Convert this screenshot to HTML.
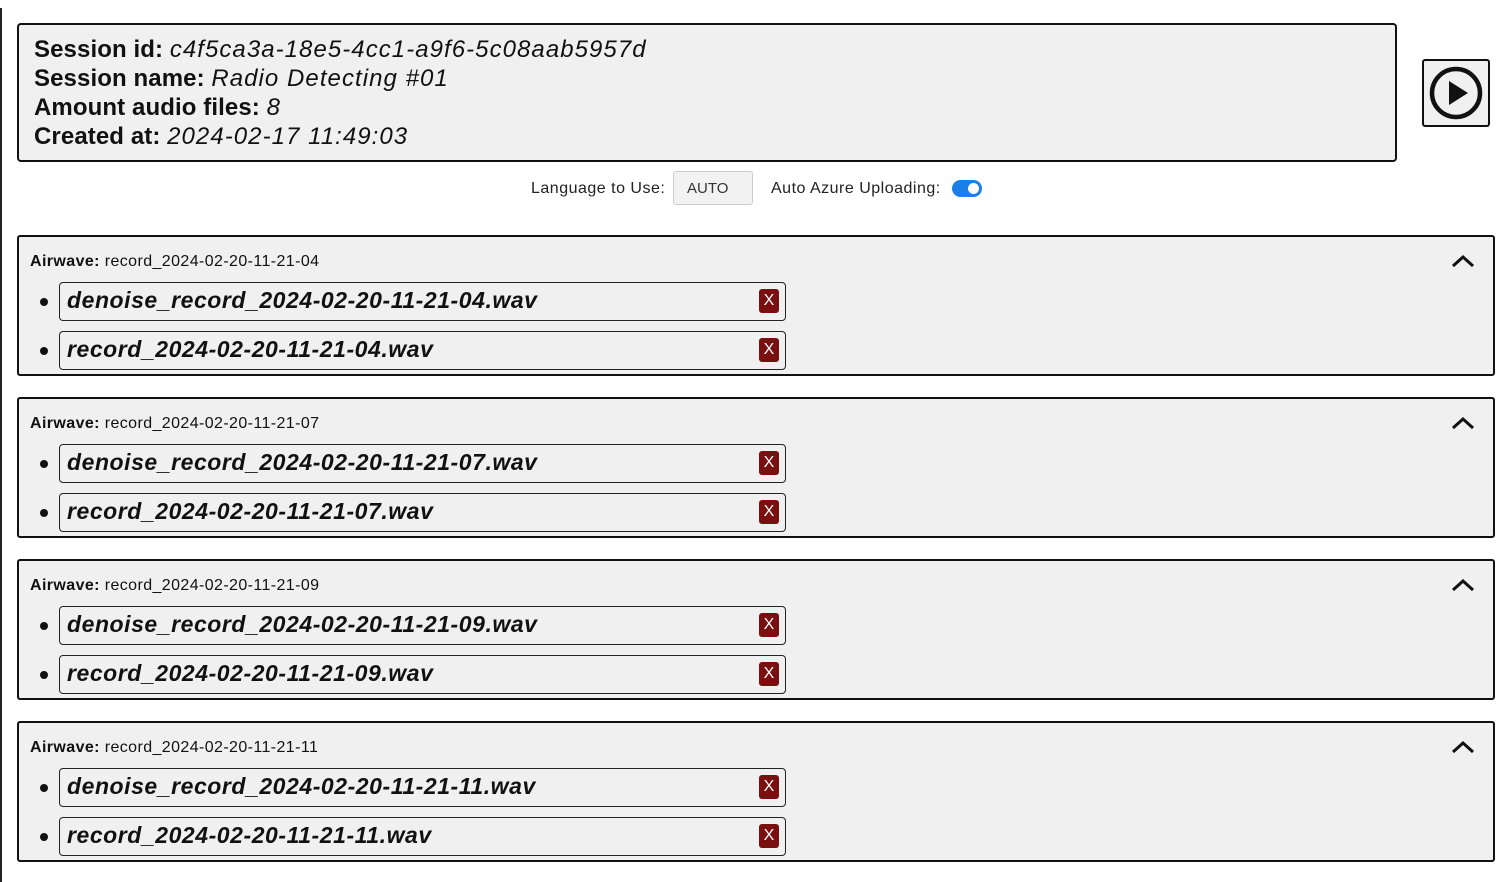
<!DOCTYPE html>
<html><head><style>
body{margin:0;width:1508px;height:882px;background:#fff;font-family:"Liberation Sans",sans-serif;position:relative;overflow:hidden;color:#111}
.vl{position:absolute;left:0;top:8px;width:2px;height:874px;background:#222}
.hdr{position:absolute;left:17px;top:23px;width:1376px;height:135px;border:2px solid #111;border-radius:4px;background:#f0f0f0}
.hdr div{position:absolute;left:15px;font-size:24px;white-space:nowrap;line-height:29px}
.hdr b{font-weight:bold;letter-spacing:0.1px}.hdr i{font-style:italic;font-weight:normal;letter-spacing:1.05px}
.play{position:absolute;left:1422px;top:59px;width:64px;height:64px;border:2px solid #111;border-radius:3px;background:#f0f0f0}
.ctl{position:absolute;top:180px;font-size:16px;letter-spacing:0.5px;color:#222}
.auto{position:absolute;left:673px;top:171px;border:1px solid #ccc;border-radius:3px;background:#f2f2f2;font-size:15px;color:#333;line-height:34px;box-sizing:border-box;padding-left:13px;width:80px;height:34px}
.tg{position:absolute;left:952px;top:180px;width:30px;height:17px;border-radius:9px;background:#1a7fe8}
.tg:after{content:"";position:absolute;right:3px;top:3px;width:11px;height:11px;border-radius:50%;background:#fff}
.sec{position:absolute;left:17px;width:1474px;height:137px;border:2px solid #111;border-radius:3px;background:#f0f0f0}
.sec .t{position:absolute;left:11px;top:16px;font-size:16px;letter-spacing:0.4px}
.sec .ch{position:absolute;left:1432px;top:16px}
.it{position:absolute;left:40px;width:725px;height:37px;border:1px solid #222;border-radius:4px;background:#f0f0f0}
.it span{position:absolute;left:7px;top:4px;font-size:23px;font-weight:bold;font-style:italic;white-space:nowrap;letter-spacing:0.55px}
.it .x{position:absolute;left:699px;top:6px;width:20px;height:24px;background:#7a0f0f;border-radius:3px;color:#fff;font-size:16px;text-align:center;line-height:24px}
.dot{position:absolute;left:21px;width:8px;height:8px;border-radius:50%;background:#111}
</style></head><body>
<div class="vl"></div>
<div class="hdr">
<div style="top:10px"><b>Session id:</b> <i>c4f5ca3a-18e5-4cc1-a9f6-5c08aab5957d</i></div>
<div style="top:39px"><b>Session name:</b> <i>Radio Detecting #01</i></div>
<div style="top:68px"><b>Amount audio files:</b> <i>8</i></div>
<div style="top:97px"><b>Created at:</b> <i>2024-02-17 11:49:03</i></div>
</div>
<div class="play"><svg width="64" height="64" viewBox="0 0 64 64"><circle cx="32" cy="32" r="24" fill="none" stroke="#111" stroke-width="4.5"/><path d="M25 20 L44 32 L25 44 Z" fill="#111"/></svg></div>
<div class="ctl" style="left:531px">Language to Use:</div>
<div class="auto">AUTO</div>
<div class="ctl" style="left:771px">Auto Azure Uploading:</div>
<div class="tg"></div>

<div class="sec" style="top:235px"><div class="t"><b>Airwave:</b> record_2024-02-20-11-21-04</div>
<svg class="ch" width="24" height="16"><path d="M2 13 L12 4 L22 13" fill="none" stroke="#111" stroke-width="3"/></svg>
<div class="dot" style="top:61px"></div><div class="it" style="top:45px"><span>denoise_record_2024-02-20-11-21-04.wav</span><div class="x">X</div></div>
<div class="dot" style="top:110px"></div><div class="it" style="top:94px"><span>record_2024-02-20-11-21-04.wav</span><div class="x">X</div></div></div>

<div class="sec" style="top:397px"><div class="t"><b>Airwave:</b> record_2024-02-20-11-21-07</div>
<svg class="ch" width="24" height="16"><path d="M2 13 L12 4 L22 13" fill="none" stroke="#111" stroke-width="3"/></svg>
<div class="dot" style="top:61px"></div><div class="it" style="top:45px"><span>denoise_record_2024-02-20-11-21-07.wav</span><div class="x">X</div></div>
<div class="dot" style="top:110px"></div><div class="it" style="top:94px"><span>record_2024-02-20-11-21-07.wav</span><div class="x">X</div></div></div>

<div class="sec" style="top:559px"><div class="t"><b>Airwave:</b> record_2024-02-20-11-21-09</div>
<svg class="ch" width="24" height="16"><path d="M2 13 L12 4 L22 13" fill="none" stroke="#111" stroke-width="3"/></svg>
<div class="dot" style="top:61px"></div><div class="it" style="top:45px"><span>denoise_record_2024-02-20-11-21-09.wav</span><div class="x">X</div></div>
<div class="dot" style="top:110px"></div><div class="it" style="top:94px"><span>record_2024-02-20-11-21-09.wav</span><div class="x">X</div></div></div>

<div class="sec" style="top:721px"><div class="t"><b>Airwave:</b> record_2024-02-20-11-21-11</div>
<svg class="ch" width="24" height="16"><path d="M2 13 L12 4 L22 13" fill="none" stroke="#111" stroke-width="3"/></svg>
<div class="dot" style="top:61px"></div><div class="it" style="top:45px"><span>denoise_record_2024-02-20-11-21-11.wav</span><div class="x">X</div></div>
<div class="dot" style="top:110px"></div><div class="it" style="top:94px"><span>record_2024-02-20-11-21-11.wav</span><div class="x">X</div></div></div>
</body></html>
